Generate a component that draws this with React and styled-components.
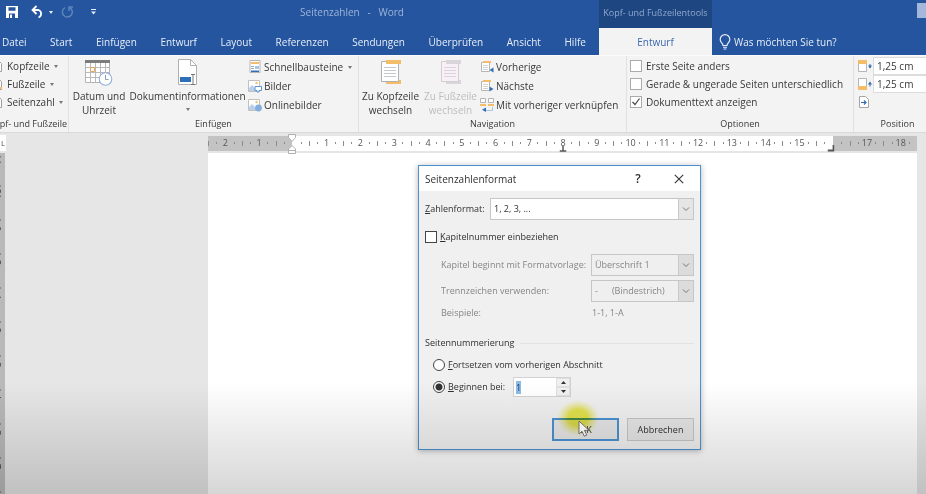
import React, { useState } from 'react';
import styled, { createGlobalStyle, css } from 'styled-components';

const palette = {
    blue: '#25559e',
    darkBlue: '#1e4681',
    ribbon: '#f3f3f3',
    desk: '#e6e6e6',
    ruler: '#c3c3c3',
    text: '#383838',
    orange: '#f3bd6a',
    accent: '#2f6fb8',
    line: '#d9d9d9',
};

const GlobalStyle = createGlobalStyle`
    * {
        box-sizing: border-box;
    }
    body {
        margin: 0;
        overflow: hidden;
        font-family: 'Open Sans', 'Noto Sans', sans-serif;
        font-size: 10px;
        line-height: 14px;
        color: ${palette.text};
    }
    button,
    input,
    select {
        font: inherit;
        color: inherit;
        margin: 0;
    }
    svg {
        display: block;
        flex: none;
    }
`;

const AppBlock = styled.div`
    position: relative;
    min-height: 100vh;
    display: flex;
    flex-direction: column;
    overflow: hidden;
    background: ${palette.desk};
`;

/* header */

const Header = styled.header`
    display: grid;
    grid-template-columns: 599px 113px 1fr;
    grid-template-rows: 28px 27px;
    background: ${palette.blue};
    color: #e6edf8;
`;

const TitleBar = styled.div`
    display: flex;
    align-items: center;
    padding: 0 0 4px 5px;
`;

const QuickAccess = styled.div`
    display: flex;
    align-items: center;
    width: 100px;
`;

const plainButton = css`
    border: none;
    padding: 0;
    background: none;
    cursor: pointer;
`;

const IconButton = styled.button`
    ${plainButton}
    display: flex;
    align-items: center;
    gap: 5px;
    margin-right: ${props => props.$gap || 0}px;
`;

const DocTitle = styled.h1`
    flex: 1;
    margin: 0;
    font-size: 10px;
    font-weight: normal;
    text-align: center;
    white-space: pre;
    color: #9db5da;
`;

const ContextTitle = styled.div`
    display: flex;
    align-items: center;
    justify-content: center;
    padding-bottom: 3px;
    background: ${palette.darkBlue};
    color: #8fa9d0;
    font-size: 9px;
    white-space: nowrap;
`;

const WindowButtons = styled.div`
    display: flex;
    justify-content: flex-end;
    padding-top: 3px;
`;

const WindowButton = styled.button`
    ${plainButton}
    width: 9px;
    height: 15px;
    background: #a3b8da;
`;

const Tabs = styled.nav`
    display: flex;
    align-items: center;
    justify-content: space-between;
    padding: 0 13px 0 2px;
`;

const Tab = styled.a`
    color: #e6edf8;
    text-decoration: none;
`;

const ActiveTab = styled(Tab)`
    display: flex;
    align-items: center;
    justify-content: center;
    background: ${palette.ribbon};
    color: #3d69b0;
`;

const TellMe = styled.button`
    ${plainButton}
    display: flex;
    align-items: center;
    gap: 3px;
    padding-left: 7px;
`;

/* ribbon */

const Ribbon = styled.div`
    display: flex;
    height: 78px;
    background: ${palette.ribbon};
    border-top: 1px solid #fbfbfb;
    border-bottom: 1px solid ${palette.line};
    white-space: nowrap;
`;

const Group = styled.section`
    flex: none;
    display: flex;
    flex-direction: column;
    width: ${props => props.$width}px;
    border-right: 1px solid #e1e1e1;
`;

const GroupBody = styled.div`
    flex: 1;
    display: flex;
    padding-left: ${props => props.$indent || 0}px;
`;

const GroupName = styled.div`
    display: flex;
    justify-content: ${props => (props.$end ? 'flex-end' : 'center')};
    height: 14px;
    padding-right: ${props => (props.$end ? 1 : 0)}px;
    font-size: 9px;
    line-height: 12px;
`;

const Stack = styled.div`
    display: flex;
    flex-direction: column;
    padding-top: ${props => (props.$wide ? 2 : 1)}px;
    row-gap: ${props => (props.$wide ? 1 : 0)}px;
`;

const SmallButton = styled.button`
    ${plainButton}
    display: flex;
    align-items: center;
    gap: ${props => props.$gap || 2}px;
    height: 18px;
    margin-left: ${props => props.$shift || 0}px;
    white-space: pre;
`;

const BigButton = styled.button`
    ${plainButton}
    display: flex;
    flex-direction: column;
    align-items: center;
    align-self: flex-start;
    width: ${props => props.$width}px;
    padding-top: 3px;
    color: ${props => (props.disabled ? '#bdbdbd' : palette.text)};
    > svg {
        margin-bottom: 3px;
    }
`;

const Caret = styled.span`
    border: 2px solid transparent;
    border-top: 3px solid #777777;
    border-bottom: none;
    margin: ${props => (props.$below ? '5px 0 0' : '0 0 0 3px')};
    ${props => props.$light && 'border-top-color: #e6edf8; margin: 0;'}
    ${props => props.$tight && 'margin: 0;'}
`;

const CheckLabel = styled.label`
    display: flex;
    align-items: center;
    gap: ${props => props.$gap || 4}px;
    height: 18px;
`;

const Check = styled.input`
    appearance: none;
    flex: none;
    width: 12px;
    height: 12px;
    border: 1px solid ${props => (props.$dark ? '#444444' : '#ababab')};
    background: #ffffff;
    &:checked {
        background: #ffffff
            url("data:image/svg+xml,%3Csvg xmlns='http://www.w3.org/2000/svg' viewBox='0 0 10 10'%3E%3Cpath d='M1.5 5l2.5 2.5 4.5-6' fill='none' stroke='%23444' stroke-width='1.2'/%3E%3C/svg%3E");
    }
`;

const Measure = styled.label`
    display: flex;
    align-items: center;
    height: 18px;
    gap: 1px;
`;

const MeasureInput = styled.input`
    width: 68px;
    height: 18px;
    padding: 0 3px;
    border: 1px solid #dcdcdc;
    background: #ffffff;
`;

/* ruler and page */

const Workspace = styled.main`
    flex: 1;
    display: grid;
    grid-template-columns: 6px minmax(0, 202fr) minmax(0, 709fr) 9px;
    grid-template-rows: 20px 1fr;
`;

const TabStop = styled.button`
    ${plainButton}
    align-self: center;
    width: 6px;
    height: 16px;
    background: #ffffff;
    color: #555555;
    font-size: 8px;
    line-height: 10px;
    overflow: hidden;
`;

const Ruler = styled.div`
    grid-column: 3;
    position: relative;
    align-self: center;
    display: flex;
    height: 15px;
    background: linear-gradient(
        to right,
        ${palette.ruler} 11.9%,
        #ffffff 11.9%,
        #ffffff 88.1%,
        ${palette.ruler} 88.1%
    );
    color: #555555;
    font-size: 9px;
`;

const Cell = styled.div`
    flex: 1 1 0;
    min-width: 0;
    display: flex;
    align-items: center;
    justify-content: space-between;
`;

const CellNumber = styled.span`
    display: flex;
    justify-content: center;
    width: 2px;
`;

const Tick = styled.i`
    width: 1px;
    height: ${props => (props.$long ? 5 : 2)}px;
    background: #8c8c8c;
`;

const Marker = styled.div`
    position: absolute;
    top: ${props => props.$top}px;
    left: ${props => props.$at}%;
    transform: translateX(-50%);
`;

const VerticalRuler = styled.div`
    grid-row: 2;
    display: flex;
    flex-direction: column;
    width: 5px;
    height: 0;
    min-height: 100%;
    overflow: hidden;
    background: #b9b9b9;
    color: #333333;
    font-size: 9px;
    line-height: 9px;
`;

const VerticalCell = styled.div`
    flex: none;
    display: flex;
    flex-direction: column;
    justify-content: space-between;
    height: 34px;
    span {
        writing-mode: vertical-rl;
        transform: rotate(180deg);
        height: 14px;
        width: 9px;
        margin-left: -7px;
        text-align: center;
    }
`;

const Page = styled.div`
    grid-column: 3;
    background: #ffffff;
`;

const Shade = styled.div`
    position: absolute;
    left: 0;
    right: 0;
    bottom: 0;
    height: 112px;
    background: linear-gradient(to bottom, rgba(0, 0, 0, 0), rgba(0, 0, 0, 0.16));
    pointer-events: none;
`;

/* dialog */

const Dialog = styled.form`
    position: absolute;
    top: 165px;
    left: 418px;
    width: 283px;
    border: 1px solid #4a92d2;
    outline: 1px solid rgba(74, 146, 210, 0.35);
    outline-offset: -1px;
    background: #f0f0f0;
    box-shadow: 0 1px 6px rgba(0, 0, 0, 0.3);
    color: #303030;
    font-size: 9px;
    line-height: 12px;
`;

const DialogTitle = styled.div`
    display: flex;
    align-items: center;
    height: 25px;
    padding: 0 16px 0 6px;
    background: #ffffff;
    h2 {
        flex: 1;
        margin: 0;
        font-size: 10px;
        font-weight: normal;
    }
`;

const TitleButton = styled.button`
    ${plainButton}
    display: flex;
    justify-content: center;
    width: 10px;
    margin-left: ${props => props.$gap || 0}px;
    font-size: 12px;
    font-weight: 600;
`;

const DialogBody = styled.div`
    padding: 7px 6px 8px;
`;

const Row = styled.div`
    display: flex;
    align-items: center;
    height: 22px;
    margin-bottom: ${props => props.$after || 0}px;
    padding-left: ${props => props.$indent || 0}px;
    color: ${props => (props.$muted ? '#868686' : 'inherit')};
    > label,
    > span:first-child {
        flex: 1;
    }
`;

const SelectBox = styled.div`
    display: flex;
    position: relative;
    width: ${props => props.$width}px;
    svg {
        position: absolute;
        right: 1px;
        top: 1px;
        pointer-events: none;
    }
`;

const Select = styled.select`
    appearance: none;
    width: 100%;
    height: 22px;
    padding: 0 18px 0 3px;
    border: 1px solid #c6c6c6;
    border-radius: 0;
    background: ${props => (props.disabled ? '#efefef' : '#ffffff')};
    opacity: 1;
`;

const Example = styled.span`
    width: 102px;
`;

const Legend = styled(Row)`
    gap: 6px;
    margin-top: 8px;
    > span:first-child {
        flex: none;
    }
    &::after {
        content: '';
        flex: 1;
        border-top: 1px solid #e2e2e2;
    }
`;

const Radio = styled.input`
    appearance: none;
    flex: none;
    width: 12px;
    height: 12px;
    border: 1px solid #444444;
    border-radius: 50%;
    background: #ffffff;
    &:checked {
        background: radial-gradient(#333333 0 3px, #ffffff 4px);
    }
`;

const Choice = styled.div`
    display: flex;
    align-items: center;
    gap: 3px;
    width: ${props => (props.$narrow ? '80px' : 'auto')};
`;

const Spinner = styled.div`
    display: grid;
    grid-template-columns: 42px 14px;
    grid-template-rows: 9px 9px;
    border: 1px solid #d2d2d2;
    background: #d2d2d2;
`;

const SpinValue = styled.div`
    grid-row: 1 / 3;
    display: flex;
    align-items: center;
    padding-left: 2px;
    background: #ffffff;
`;

const SpinInput = styled.input`
    width: 5px;
    height: 13px;
    padding: 0;
    border: none;
    background: #8dbbe8;
    color: #1c3c60;
    field-sizing: content;
`;

const SpinButton = styled.button`
    ${plainButton}
    display: flex;
    align-items: center;
    justify-content: center;
    border: 1px solid #e0e0e0;
    background: #f0f0f0;
    cursor: default;
`;

const Actions = styled.div`
    display: flex;
    justify-content: flex-end;
    gap: 8px;
    margin-top: 20px;
`;

const ActionSlot = styled.div`
    position: relative;
`;

const ActionButton = styled.button`
    width: 67px;
    height: 23px;
    padding: 0;
    border: ${props => (props.$primary ? '2px solid #4a90d0' : '1px solid #c4c4c4')};
    background: #e4e4e4;
`;

const Glow = styled.div`
    position: absolute;
    left: 5px;
    top: -18px;
    width: 42px;
    height: 36px;
    border-radius: 50%;
    background: radial-gradient(closest-side, rgba(236, 234, 50, 0.85) 45%, rgba(240, 238, 90, 0.4) 75%, rgba(245, 240, 120, 0));
    mix-blend-mode: multiply;
    pointer-events: none;
`;

const Pointer = styled.svg`
    position: absolute;
    left: 26px;
    top: 2px;
    pointer-events: none;
`;

/* icons */

const SaveIcon = () => (
    <svg width="14" height="14" viewBox="0 0 14 14">
        <path d="M1 1h12v12H1z" fill="#fff" />
        <path d="M3.500 2.200h7v3.600h-7zM4 8.500h6v4.500H4z" fill={palette.blue} />
        <path d="M5 9.500h2V13H5z" fill="#fff" />
    </svg>
);

const UndoIcon = () => (
    <svg width="13" height="14" viewBox="0 0 13 14">
        <path d="M2 5h5.500a4 4 0 0 1 0 7.500" fill="none" stroke="#fff" strokeWidth="1.8" />
        <path d="M5.500 1L1.500 5l4 4" fill="none" stroke="#fff" strokeWidth="1.8" />
    </svg>
);

const RedoIcon = () => (
    <svg width="13" height="14" viewBox="0 0 13 14">
        <path d="M8.500 2.500A5 5 0 1 1 4 2.600" fill="none" stroke="#5f84bd" strokeWidth="1.5" />
        <path d="M8 6V2h4" fill="none" stroke="#5f84bd" strokeWidth="1.5" />
    </svg>
);

const MoreIcon = () => (
    <svg width="5" height="6" viewBox="0 0 5 6">
        <path d="M0 0h5v1H0zM0 2.500h5L2.500 5.500z" fill="#e6edf8" />
    </svg>
);

const BulbIcon = () => (
    <svg width="12" height="16" viewBox="0 0 12 16">
        <path d="M4 11.500C4 9 1.200 8.500 1.200 5.400a4.800 4.800 0 0 1 9.600 0C10.800 8.500 8 9 8 11.500z" fill="none" stroke="#e6edf8" strokeWidth="1.2" />
        <path d="M4 13.200h4M4.600 15h2.800" stroke="#e6edf8" strokeWidth="1.1" />
    </svg>
);

const SheetIcon = ({ mark }) => (
    <svg width="14" height="14" viewBox="0 0 14 14">
        <path d="M2.500 1.500h7l3 3v8h-10z" fill="#fff" stroke="#a0a0a0" />
        {mark && <path d="M10 10h3v2h-3z" fill={palette.orange} />}
    </svg>
);

const CalendarIcon = () => (
    <svg width="28" height="27" viewBox="0 0 28 27">
        <path d="M.5 1.500h24v22H.5z" fill="#fff" stroke="#b4b4b4" />
        <path d="M0 1h25v3H0z" fill="#7d7d7d" />
        <path d="M5.500 4v19M10.500 4v19M15.500 4v19M20.500 4v19M1 8.500h23M1 13.500h23M1 18.500h23" stroke="#b9b9b9" />
        <path d="M5.500 8.500h4v4h-4z" fill="#fff" stroke="#eba55c" />
        <circle cx="20.500" cy="20" r="6.300" fill="#fff" stroke="#8fb0da" strokeWidth="1.100" />
        <path d="M20.500 16v4.500h3" fill="none" stroke="#8a9db5" />
    </svg>
);

const DocInfoIcon = () => (
    <svg width="22" height="27" viewBox="0 0 22 27">
        <path d="M1.500.5h12l6 6v19h-18z" fill="#fff" stroke="#b0b0b0" />
        <path d="M13.500.5v6h6" fill="none" stroke="#b0b0b0" />
        <path d="M3 18h11v5H3z" fill={palette.accent} />
        <path d="M14 15.500h4M16 15.500v10M14 25.500h4" stroke="#777" />
    </svg>
);

const PartsIcon = () => (
    <svg width="14" height="14" viewBox="0 0 14 14">
        <path d="M2 .5h10v12H2z" fill="#fff" stroke="#b5b5b5" />
        <path d="M3 2h8v2H3z" fill={palette.orange} />
        <path d="M3 6.500h3M3 8.500h3" stroke="#9ab" />
        <path d="M7 6h4v3H7z" fill="#a9c4e4" />
        <path d="M3 10.500h8v1.500H3z" fill={palette.accent} />
    </svg>
);

const PictureIcon = ({ online }) => (
    <svg width="14" height="14" viewBox="0 0 14 14">
        <path d="M.5 1.500h11v11H.5z" fill="#fff" stroke="#c0c0c0" />
        <circle cx="8.500" cy="4" r="1.200" fill={palette.orange} />
        <path d="M1 12V9l3-3 4 4v2z" fill="#b9d0ea" />
        {online
            ? <circle cx="10.500" cy="10" r="3.400" fill="#86aedd" />
            : <path d="M7 7.500h6.500v4H11V13H9v-1.500H7z" fill="#fff" stroke="#5b92d0" />}
    </svg>
);

const HeaderJumpIcon = ({ muted }) => (
    <svg width="22" height="27" viewBox="0 0 22 27">
        <path d="M6 21h15v4H6z" fill={muted ? '#d9d5da' : palette.orange} />
        <path d="M1.500 2.500h17v20h-17z" fill={muted ? '#f7f0f7' : '#fff'} stroke={muted ? '#d3ccd3' : '#b0b0b0'} />
        <path d="M6 1h15v4H6z" fill={muted ? '#d9d5da' : palette.orange} />
        <path d="M4 8.500h12M4 11.500h12M4 14.500h12M4 17.500h12" stroke={muted ? '#ddd3dd' : '#c4c9d0'} />
    </svg>
);

const StepIcon = ({ next }) => (
    <svg width="14" height="14" viewBox="0 0 14 14">
        <path d="M1.500 2.500h8v9h-8z" fill="#fff" stroke="#b5b5b5" />
        <path d="M3 1h8v2H3z" fill={palette.orange} />
        <path d="M3 5.500h5M3 7.500h5M3 9.500h5" stroke="#d2d2d2" />
        <path d={next ? 'M9.500 7.500v5l4-2.500z' : 'M13.500 7.500v5l-4-2.500z'} fill={palette.accent} />
    </svg>
);

const LinkIcon = () => (
    <svg width="14" height="14" viewBox="0 0 14 14">
        <path d="M.5.5h5v4h-5zM8.500.5h5v4h-5z" fill="#fff" stroke="#b5b5b5" />
        <path d="M0 6h6v2H0zM8 6h6v2H8z" fill={palette.orange} />
        <path d="M12.500 9v3.500H4" fill="none" stroke="#aac4e4" />
        <path d="M6 9.500v4.500L2 11.800z" fill={palette.accent} />
    </svg>
);

const MarginIcon = ({ bottom }) => (
    <svg width="14" height="14" viewBox="0 0 14 14">
        <path d="M.5 1.500h8v11h-8z" fill="#fff" stroke="#b5b5b5" />
        <path d={bottom ? 'M0 9h9v4H0z' : 'M0 1h9v4H0z'} fill={palette.orange} />
        <path d={bottom ? 'M12 9.500v-4' : 'M12 5v4'} stroke={palette.accent} />
        <path d={bottom ? 'M10 7.500l2-3 2 3z' : 'M10 6.500l2 3 2-3z'} fill={palette.accent} />
    </svg>
);

const AlignTabIcon = () => (
    <svg width="14" height="14" viewBox="0 0 14 14">
        <path d="M1.500 1.500h6l3 3v8h-9z" fill="#fff" stroke="#a5a5a5" />
        <path d="M3 7.500h5M6 5.500l2 2-2 2" fill="none" stroke={palette.accent} strokeWidth="1.200" />
    </svg>
);

const ArrowBox = ({ muted }) => (
    <svg width="15" height="20" viewBox="0 0 15 20">
        <path d="M0 0h15v20H0z" fill={muted ? '#dcdcdc' : '#e5e5e5'} />
        <path d="M.5 0v20" stroke="#c9c9c9" />
        <path d="M5 8.500l3 3 3-3" fill="none" stroke="#777" />
    </svg>
);

/* data */

const tabs = ['Datei', 'Start', 'Einfügen', 'Entwurf', 'Layout', 'Referenzen', 'Sendungen', 'Überprüfen', 'Ansicht', 'Hilfe'];
const rulerNumbers = [2, 1, '', 1, 2, 3, 4, 5, 6, 7, 8, 9, 10, 11, 12, 13, 14, 15, '', 17, 18];
const verticalNumbers = [11, 10, 9, 8, 7, 6, 5, 4, 3, 2];

const AppHeader = () => (
    <Header>
        <TitleBar>
            <QuickAccess>
                <IconButton $gap={12} aria-label="Speichern"><SaveIcon /></IconButton>
                <IconButton $gap={8} aria-label="Rückgängig"><UndoIcon /><Caret $light /></IconButton>
                <IconButton $gap={17} aria-label="Wiederholen"><RedoIcon /></IconButton>
                <IconButton aria-label="Anpassen"><MoreIcon /></IconButton>
            </QuickAccess>
            <DocTitle>{'Seitenzahlen   -   Word'}</DocTitle>
        </TitleBar>
        <ContextTitle>Kopf- und Fußzeilentools</ContextTitle>
        <WindowButtons><WindowButton aria-label="Menüband" /></WindowButtons>
        <Tabs>
            {tabs.map(tab => <Tab key={tab} href="#">{tab}</Tab>)}
        </Tabs>
        <ActiveTab href="#">Entwurf</ActiveTab>
        <TellMe><BulbIcon />Was möchten Sie tun?</TellMe>
    </Header>
);

const AppRibbon = () => (
    <Ribbon>
        <Group $width={69}>
            <GroupBody>
                <Stack>
                    <SmallButton $shift={-11} $gap={4}><SheetIcon />Kopfzeile<Caret $tight /></SmallButton>
                    <SmallButton $shift={-11} $gap={4}><SheetIcon mark />Fußzeile<Caret $tight /></SmallButton>
                    <SmallButton $shift={-11} $gap={4}><SheetIcon />Seitenzahl<Caret $tight /></SmallButton>
                </Stack>
            </GroupBody>
            <GroupName $end>Kopf- und Fußzeile</GroupName>
        </Group>
        <Group $width={290}>
            <GroupBody $indent={2}>
                <BigButton $width={56}><CalendarIcon />Datum und<br />Uhrzeit</BigButton>
                <BigButton $width={121}><DocInfoIcon />Dokumentinformationen<Caret $below /></BigButton>
                <Stack $wide>
                    <SmallButton><PartsIcon />Schnellbausteine<Caret /></SmallButton>
                    <SmallButton><PictureIcon />Bilder</SmallButton>
                    <SmallButton><PictureIcon online />Onlinebilder</SmallButton>
                </Stack>
            </GroupBody>
            <GroupName>Einfügen</GroupName>
        </Group>
        <Group $width={268}>
            <GroupBody $indent={1}>
                <BigButton $width={61}><HeaderJumpIcon />Zu Kopfzeile<br />wechseln</BigButton>
                <BigButton $width={59} disabled><HeaderJumpIcon muted />Zu Fußzeile<br />wechseln</BigButton>
                <Stack $wide>
                    <SmallButton><StepIcon />Vorherige</SmallButton>
                    <SmallButton><StepIcon next />Nächste</SmallButton>
                    <SmallButton><LinkIcon />Mit vorheriger verknüpfen</SmallButton>
                </Stack>
            </GroupBody>
            <GroupName>Navigation</GroupName>
        </Group>
        <Group $width={227}>
            <GroupBody $indent={3}>
                <Stack>
                    <CheckLabel><Check type="checkbox" />Erste Seite anders</CheckLabel>
                    <CheckLabel><Check type="checkbox" />Gerade &amp; ungerade Seiten unterschiedlich</CheckLabel>
                    <CheckLabel><Check type="checkbox" defaultChecked />Dokumenttext anzeigen</CheckLabel>
                </Stack>
            </GroupBody>
            <GroupName>Optionen</GroupName>
        </Group>
        <Group $width={88}>
            <GroupBody $indent={4}>
                <Stack>
                    <Measure><MarginIcon /><MeasureInput defaultValue="1,25 cm" aria-label="Kopfzeile von oben" /></Measure>
                    <Measure><MarginIcon bottom /><MeasureInput defaultValue="1,25 cm" aria-label="Fußzeile von unten" /></Measure>
                    <SmallButton aria-label="Ausrichtungstabstopp"><AlignTabIcon /></SmallButton>
                </Stack>
            </GroupBody>
            <GroupName>Position</GroupName>
        </Group>
    </Ribbon>
);

const HorizontalRuler = () => (
    <Ruler>
        {rulerNumbers.map((number, i) => (
            <Cell key={i}>
                <Tick $long />
                <Tick />
                <CellNumber>{number}</CellNumber>
                <Tick />
                <span />
            </Cell>
        ))}
        <Marker $at={11.9} $top={-2}>
            <svg width="9" height="20" viewBox="0 0 9 20">
                <path d="M1 .5h7v3L4.500 7.500 1 3.500zM4.500 11.500L8 15v4.500H1V15zM1 16.500h7" fill="#fff" stroke="#b0b0b0" />
            </svg>
        </Marker>
        <Marker $at={50} $top={10}>
            <svg width="7" height="6" viewBox="0 0 7 6">
                <path d="M3.500 0v5M0 5h7" stroke="#555" strokeWidth="1.500" />
            </svg>
        </Marker>
        <Marker $at={87.8} $top={8}>
            <svg width="7" height="8" viewBox="0 0 7 8">
                <path d="M6 1v5.500H0" fill="none" stroke="#555" strokeWidth="1.800" />
            </svg>
        </Marker>
    </Ruler>
);

const PageNumberDialog = () => {
    const [mode, setMode] = useState('start');
    const [start, setStart] = useState('1');

    const onStep = (step) => {
        setStart(String(Math.max(0, Number(start) + step)));
    };

    return (
        <Dialog onSubmit={e => e.preventDefault()}>
            <DialogTitle>
                <h2>Seitenzahlenformat</h2>
                <TitleButton type="button">?</TitleButton>
                <TitleButton type="button" $gap={31} aria-label="Schließen">
                    <svg width="10" height="10" viewBox="0 0 10 10">
                        <path d="M.8.8l8.400 8.400M9.200.8L.8 9.200" stroke="#333" strokeWidth="1.100" />
                    </svg>
                </TitleButton>
            </DialogTitle>
            <DialogBody>
                <Row $after={6}>
                    <label htmlFor="format"><u>Z</u>ahlenformat:</label>
                    <SelectBox $width={204}>
                        <Select id="format"><option>1, 2, 3, ...</option></Select>
                        <ArrowBox />
                    </SelectBox>
                </Row>
                <Row $after={6}>
                    <CheckLabel $gap={3}><Check type="checkbox" $dark /><span><u>K</u>apitelnummer einbeziehen</span></CheckLabel>
                </Row>
                <Row $indent={16} $after={4} $muted>
                    <label htmlFor="style">Kapitel beginnt mit Formatvorlage:</label>
                    <SelectBox $width={103}>
                        <Select id="style" disabled><option>Überschrift 1</option></Select>
                        <ArrowBox muted />
                    </SelectBox>
                </Row>
                <Row $indent={16} $muted>
                    <label htmlFor="separator">Trennzeichen verwenden:</label>
                    <SelectBox $width={103}>
                        <Select id="separator" disabled><option>{'-\u00a0\u00a0\u00a0\u00a0\u00a0\u00a0(Bindestrich)'}</option></Select>
                        <ArrowBox muted />
                    </SelectBox>
                </Row>
                <Row $indent={16} $muted>
                    <span>Beispiele:</span>
                    <Example>1-1, 1-A</Example>
                </Row>
                <Legend><span>Seitennummerierung</span></Legend>
                <Row $indent={8}>
                    <Choice>
                        <Radio type="radio" id="continue" checked={mode === 'continue'} onChange={() => setMode('continue')} />
                        <label htmlFor="continue"><u>F</u>ortsetzen vom vorherigen Abschnitt</label>
                    </Choice>
                </Row>
                <Row $indent={8}>
                    <Choice $narrow>
                        <Radio type="radio" id="start" checked={mode === 'start'} onChange={() => setMode('start')} />
                        <label htmlFor="start"><u>B</u>eginnen bei:</label>
                    </Choice>
                    <Spinner>
                        <SpinValue>
                            <SpinInput value={start} onChange={e => setStart(e.target.value)} aria-label="Beginnen bei" />
                        </SpinValue>
                        <SpinButton type="button" aria-label="Erhöhen" onClick={() => onStep(1)}>
                            <svg width="5" height="3" viewBox="0 0 5 3"><path d="M0 3h5L2.500 0z" fill="#333" /></svg>
                        </SpinButton>
                        <SpinButton type="button" aria-label="Verringern" onClick={() => onStep(-1)}>
                            <svg width="5" height="3" viewBox="0 0 5 3"><path d="M0 0h5L2.500 3z" fill="#333" /></svg>
                        </SpinButton>
                    </Spinner>
                </Row>
                <Actions>
                    <ActionSlot>
                        <ActionButton $primary>OK</ActionButton>
                        <Glow />
                        <Pointer width="13" height="18" viewBox="0 0 13 18">
                            <path d="M1 1v13l3-2.800 2.300 5 2.400-1.100L6.500 10.400H11z" fill="#fff" stroke="#666" strokeWidth=".9" />
                        </Pointer>
                    </ActionSlot>
                    <ActionButton type="button">Abbrechen</ActionButton>
                </Actions>
            </DialogBody>
        </Dialog>
    );
};

const App = () => (
    <AppBlock>
        <GlobalStyle />
        <AppHeader />
        <AppRibbon />
        <Workspace>
            <TabStop aria-label="Tabstopp">L</TabStop>
            <HorizontalRuler />
            <VerticalRuler>
                {verticalNumbers.map(number => (
                    <VerticalCell key={number}>
                        <span>{number}</span>
                        <Tick />
                    </VerticalCell>
                ))}
            </VerticalRuler>
            <Page />
        </Workspace>
        <PageNumberDialog />
        <Shade />
    </AppBlock>
);

export default App;
